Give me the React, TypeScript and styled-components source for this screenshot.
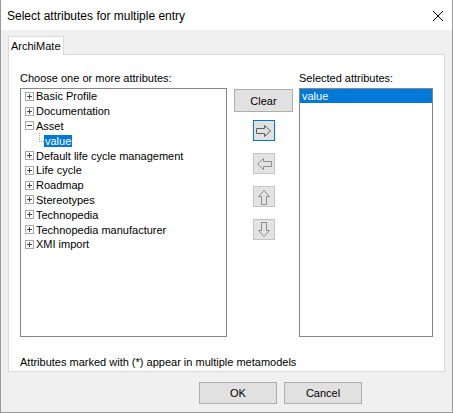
import React from 'react';
import styled, { createGlobalStyle } from 'styled-components';

const GlobalStyle = createGlobalStyle`
    html, body {
        margin: 0;
        padding: 0;
        background: #ffffff;
    }
    body {
        font-family: "Liberation Sans", Arial, sans-serif;
        font-size: 11px;
        color: #000;
    }
    * {
        box-sizing: border-box;
    }
`;

const Window = styled.div`
    width: 453px;
    height: 413px;
    display: flex;
    flex-direction: column;
    background: #f0f0f0;
    border: 1px solid #999999;
    border-top: none;
`;

const TitleBar = styled.div`
    height: 30px;
    flex: none;
    display: flex;
    align-items: center;
    justify-content: space-between;
    padding: 1px 9px 0 6px;
    background: #ffffff;
    font-size: 12px;
`;

const CloseButton = styled.span`
    display: flex;
    width: 10px;
    height: 10px;
`;

const Body = styled.div`
    flex: 1;
    display: flex;
    flex-direction: column;
    padding: 6px 7px 0;
`;

const TabStrip = styled.div`
    display: flex;
`;

const Tab = styled.div`
    position: relative;
    z-index: 1;
    height: 19px;
    margin-bottom: -1px;
    padding: 0 2px;
    display: flex;
    align-items: center;
    background: #ffffff;
    border: 1px solid #d9d9d9;
    border-bottom: none;
`;

const Panel = styled.div`
    flex: 1;
    display: flex;
    flex-direction: column;
    padding: 17px 11px 0;
    background: #ffffff;
    border: 1px solid #d9d9d9;
`;

const Columns = styled.div`
    display: flex;
`;

const Column = styled.div<{ $width: number }>`
    width: ${p => p.$width}px;
    display: flex;
    flex-direction: column;
`;

const Label = styled.div`
    height: 13px;
    line-height: 13px;
    margin-bottom: 3px;
    white-space: nowrap;
`;

const ListBox = styled.div`
    height: 249px;
    border: 1px solid #828790;
    background: #ffffff;
    overflow: hidden;
`;

const TreeRow = styled.div`
    height: 14.8px;
    display: flex;
    align-items: center;
    padding-left: 4px;
    white-space: nowrap;
`;

const Expander = styled.svg`
    flex: none;
    margin-right: 2px;
`;

const ChildRow = styled.div`
    height: 14.8px;
    display: flex;
    align-items: flex-start;
    padding-left: 18px;
`;

const Connector = styled.span`
    width: 5px;
    height: 9px;
    border-left: 1px dotted #a0a0a0;
    border-bottom: 1px dotted #a0a0a0;
`;

const Selected = styled.span`
    height: 12px;
    line-height: 12px;
    margin-top: 2px;
    padding: 0 1px;
    background: #0078d7;
    color: #ffffff;
`;

const ListItem = styled.div<{ $selected?: boolean }>`
    height: 14px;
    line-height: 14px;
    padding-left: 2px;
    background: ${p => (p.$selected ? '#0078d7' : 'transparent')};
    color: ${p => (p.$selected ? '#ffffff' : '#000000')};
`;

const Middle = styled.div`
    width: 59px;
    margin: 0 6px 0 7px;
    padding-top: 17px;
    display: flex;
    flex-direction: column;
    align-items: center;
`;

const PushButton = styled.button<{ $width: number }>`
    width: ${p => p.$width}px;
    height: ${p => (p.$width > 60 ? 22 : 23)}px;
    padding: 0;
    background: #e1e1e1;
    border: 1px solid #adadad;
    font-family: "Liberation Sans", Arial, sans-serif;
    font-size: 11px;
    color: #000;
`;

const ArrowStack = styled.div`
    margin-top: 8px;
    display: flex;
    flex-direction: column;
    gap: 12px;
`;

const ArrowButton = styled.button<{ $focused?: boolean }>`
    width: 22px;
    height: 21px;
    padding: 0;
    display: flex;
    align-items: center;
    justify-content: center;
    background: ${p => (p.$focused ? '#e1e1e1' : '#e3e3e3')};
    border: 1px solid ${p => (p.$focused ? '#0078d7' : '#c4c4c4')};
`;

const Note = styled.div`
    margin-top: 19px;
    height: 13px;
    line-height: 13px;
`;

const Footer = styled.div`
    height: 40px;
    flex: none;
    display: flex;
    justify-content: flex-end;
    gap: 7px;
    padding: 10px 83px 0 0;
`;

const tree: { label: string; open?: boolean; children?: string[] }[] = [
    { label: 'Basic Profile' },
    { label: 'Documentation' },
    { label: 'Asset', open: true, children: ['value'] },
    { label: 'Default life cycle management' },
    { label: 'Life cycle' },
    { label: 'Roadmap' },
    { label: 'Stereotypes' },
    { label: 'Technopedia' },
    { label: 'Technopedia manufacturer' },
    { label: 'XMI import' },
];

const ExpandIcon = ({ open }: { open?: boolean }) => (
    <Expander width="9" height="9" viewBox="0 0 9 9" shapeRendering="crispEdges">
        <rect x="0.5" y="0.5" width="8" height="8" fill="#fff" stroke="#a8a8a8" />
        <line x1="2" y1="4.5" x2="7" y2="4.5" stroke="#4a4a4a" />
        {!open && <line x1="4.5" y1="2" x2="4.5" y2="7" stroke="#4a4a4a" />}
    </Expander>
);

const rotation = { right: 0, left: 180, up: 270, down: 90 };

const Arrow = ({ dir, color }: { dir: keyof typeof rotation; color: string }) => (
    <svg
        width="16"
        height="12"
        viewBox="0 0 16 12"
        style={{ transform: `rotate(${rotation[dir]}deg)` }}
    >
        <polygon
            points="0.5,3.5 8.5,3.5 8.5,0.5 14.5,6 8.5,11.5 8.5,8.5 0.5,8.5"
            fill="none"
            stroke={color}
            strokeWidth="1"
        />
    </svg>
);

const App: React.FC = () => {
    return (
        <>
            <GlobalStyle />
            <Window>
                <TitleBar>
                    <span>Select attributes for multiple entry</span>
                    <CloseButton>
                        <svg width="10" height="10" viewBox="0 0 10 10">
                            <path d="M0 0 L10 10 M10 0 L0 10" stroke="#000" strokeWidth="1" />
                        </svg>
                    </CloseButton>
                </TitleBar>
                <Body>
                    <TabStrip>
                        <Tab>ArchiMate</Tab>
                    </TabStrip>
                    <Panel>
                        <Columns>
                            <Column $width={207}>
                                <Label>Choose one or more attributes:</Label>
                                <ListBox>
                                    {tree.map(node => (
                                        <React.Fragment key={node.label}>
                                            <TreeRow>
                                                <ExpandIcon open={node.open} />
                                                {node.label}
                                            </TreeRow>
                                            {node.children?.map(child => (
                                                <ChildRow key={child}>
                                                    <Connector />
                                                    <Selected>{child}</Selected>
                                                </ChildRow>
                                            ))}
                                        </React.Fragment>
                                    ))}
                                </ListBox>
                            </Column>
                            <Middle>
                                <PushButton $width={59}>Clear</PushButton>
                                <ArrowStack>
                                    <ArrowButton $focused>
                                        <Arrow dir="right" color="#5a5a5a" />
                                    </ArrowButton>
                                    <ArrowButton>
                                        <Arrow dir="left" color="#8c8c8c" />
                                    </ArrowButton>
                                    <ArrowButton>
                                        <Arrow dir="up" color="#8c8c8c" />
                                    </ArrowButton>
                                    <ArrowButton>
                                        <Arrow dir="down" color="#8c8c8c" />
                                    </ArrowButton>
                                </ArrowStack>
                            </Middle>
                            <Column $width={134}>
                                <Label>Selected attributes:</Label>
                                <ListBox>
                                    <ListItem $selected>value</ListItem>
                                </ListBox>
                            </Column>
                        </Columns>
                        <Note>Attributes marked with (*) appear in multiple metamodels</Note>
                    </Panel>
                    <Footer>
                        <PushButton $width={78}>OK</PushButton>
                        <PushButton $width={78}>Cancel</PushButton>
                    </Footer>
                </Body>
            </Window>
        </>
    );
};

export default App;
